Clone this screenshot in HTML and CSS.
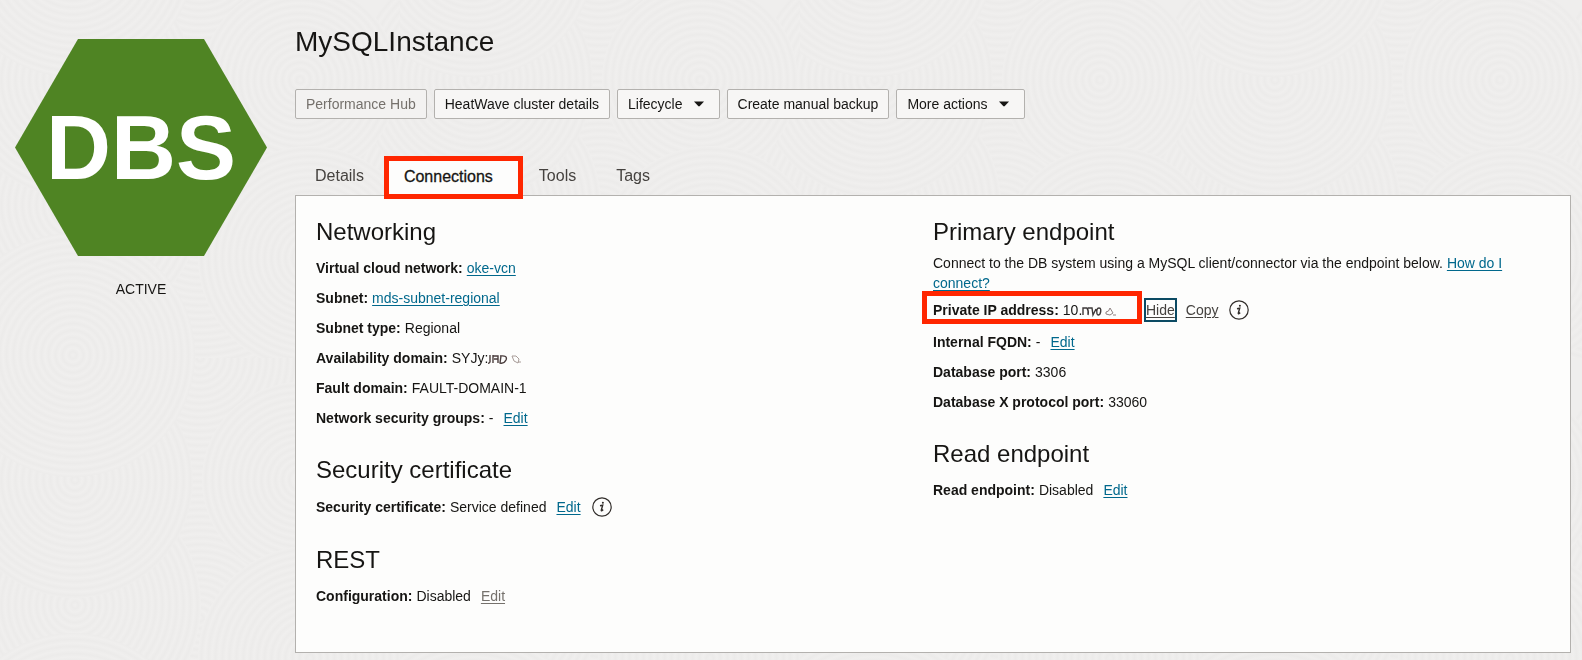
FILE: index.html
```html
<!DOCTYPE html>
<html lang="en">
<head>
<meta charset="utf-8">
<title>MySQLInstance</title>
<link rel="stylesheet" href="styles.css">
</head>
<body>
<svg class="texture" aria-hidden="true">
  <defs>
    <radialGradient id="rings" gradientUnits="userSpaceOnUse" cx="0" cy="0" r="7" spreadMethod="repeat">
      <stop offset="0" stop-color="#f0efee"/>
      <stop offset="0.5" stop-color="#ecebea"/>
      <stop offset="1" stop-color="#f0efee"/>
    </radialGradient>
    <pattern id="waves" patternUnits="userSpaceOnUse" width="400" height="400" x="0" y="-42">
      <rect width="400" height="400" fill="#efeeed"/>
      <g fill="url(#rings)">
        <circle r="160" transform="translate(200 0)"/>
        <circle r="160" transform="translate(200 400)"/>
        <circle r="150" transform="translate(200 260)"/>
        <circle r="140" transform="translate(0 320)"/>
        <circle r="140" transform="translate(400 320)"/>
        <circle r="126" transform="translate(75 247)"/>
        <circle r="126" transform="translate(475 247)"/>
        <circle r="118" transform="translate(75 122)"/>
        <circle r="118" transform="translate(475 122)"/>
        <circle r="98" transform="translate(300 122)"/>
        <circle r="112" transform="translate(310 300)"/>
        <circle r="122" transform="translate(73 -3)"/>
        <circle r="122" transform="translate(73 397)"/>
      </g>
    </pattern>
  </defs>
  <rect width="100%" height="100%" fill="url(#waves)"/>
</svg>

<div class="page">
  <aside class="resource">
    <svg class="hexagon" viewBox="0 0 252 217" role="img" aria-label="DBS">
      <polygon points="63,0 189,0 252,108.500 189,217 63,217 0,108.500" fill="#4f8423"/>
      <text class="hexagon-text" x="126" y="140" text-anchor="middle">DBS</text>
    </svg>
    <p class="state">ACTIVE</p>
  </aside>

  <main class="main">
    <h1 class="title">MySQLInstance</h1>

    <div class="actions">
      <button class="action" type="button" disabled>Performance Hub</button>
      <button class="action" type="button">HeatWave cluster details</button>
      <button class="action action-menu" type="button">Lifecycle <svg class="caret" viewBox="0 0 10 6" aria-hidden="true"><path d="M0 0.500h10L5.800 5q-.8.8-1.600 0z"/></svg></button>
      <button class="action" type="button">Create manual backup</button>
      <button class="action action-menu" type="button">More actions <svg class="caret" viewBox="0 0 10 6" aria-hidden="true"><path d="M0 0.500h10L5.800 5q-.8.8-1.600 0z"/></svg></button>
    </div>

    <nav class="tabs">
      <a class="tab" href="#details">Details</a>
      <a class="tab tab-active" href="#connections" aria-current="page">Connections</a>
      <a class="tab" href="#tools">Tools</a>
      <a class="tab" href="#tags">Tags</a>
    </nav>

    <div class="panel" id="connections">
      <div class="column">
        <section class="section">
          <h2 class="heading">Networking</h2>
          <div class="row"><span class="label">Virtual cloud network:</span><a class="link" href="#vcn">oke-vcn</a></div>
          <div class="row"><span class="label">Subnet:</span><a class="link" href="#subnet">mds-subnet-regional</a></div>
          <div class="row"><span class="label">Subnet type:</span><span class="value">Regional</span></div>
          <div class="row"><span class="label">Availability domain:</span><span class="value">SYJy:<svg class="scribble" viewBox="0 0 36 14" aria-hidden="true"><path d="M2 3v7q-1 2-3 1M5 3v8M5 4h5v3H6M10 4v7M12 4q8-1 6 4q-2 4-6 3l1-7" stroke="#4a3d3d"/><path d="M24 4l4 0 3 3-1 4-4-2-2-5M30 10h3" stroke="#a89c98" stroke-width="1"/></svg></span></div>
          <div class="row"><span class="label">Fault domain:</span><span class="value">FAULT-DOMAIN-1</span></div>
          <div class="row"><span class="label">Network security groups:</span><span class="value">-</span><a class="link edit" href="#nsg">Edit</a></div>
        </section>
        <section class="section">
          <h2 class="heading">Security certificate</h2>
          <div class="row row-info"><span class="label">Security certificate:</span><span class="value">Service defined</span><a class="link edit" href="#cert">Edit</a><button class="info" type="button" aria-label="About the security certificate"><svg viewBox="0 0 20 20" aria-hidden="true"><circle cx="10" cy="10" r="9.200"/><path class="info-stem" d="M8 8.800l2.700-.6-1.400 5q-.1.900.6.500l1.300-1.100"/><circle class="info-dot" cx="10.900" cy="5.800" r="1"/></svg></button></div>
        </section>
        <section class="section">
          <h2 class="heading">REST</h2>
          <div class="row"><span class="label">Configuration:</span><span class="value">Disabled</span><a class="link link-muted edit" href="#rest">Edit</a></div>
        </section>
      </div>

      <div class="column">
        <section class="section">
          <h2 class="heading heading-tight">Primary endpoint</h2>
          <p class="description">Connect to the DB system using a MySQL client/connector via the endpoint below. <a class="link" href="#help">How do I connect?</a></p>
          <div class="row row-ip"><span class="ip"><span class="label">Private IP address:</span><span class="value">10.<svg class="scribble" viewBox="0 0 36 14" aria-hidden="true"><path d="M1 11V4h4q2 3 1 7M6 4h4l1 7 3-6M15 10q-1-6 2-6t1 6q-2 2-3 0" stroke="#3d3838"/><path d="M24 8q3 0 4-4l3 5-3 2-4-1v-2M31 11h3" stroke="#8d8080" stroke-width="1"/></svg></span></span><a class="link link-dark hide" href="#hide">Hide</a><a class="link link-dark copy" href="#copy">Copy</a><button class="info" type="button" aria-label="About the private IP address"><svg viewBox="0 0 20 20" aria-hidden="true"><circle cx="10" cy="10" r="9.200"/><path class="info-stem" d="M8 8.800l2.700-.6-1.400 5q-.1.900.6.500l1.300-1.100"/><circle class="info-dot" cx="10.900" cy="5.800" r="1"/></svg></button></div>
          <div class="row"><span class="label">Internal FQDN:</span><span class="value">-</span><a class="link edit" href="#fqdn">Edit</a></div>
          <div class="row"><span class="label">Database port:</span><span class="value">3306</span></div>
          <div class="row"><span class="label">Database X protocol port:</span><span class="value">33060</span></div>
        </section>
        <section class="section">
          <h2 class="heading">Read endpoint</h2>
          <div class="row"><span class="label">Read endpoint:</span><span class="value">Disabled</span><a class="link edit" href="#read">Edit</a></div>
        </section>
      </div>
    </div>
  </main>
</div>
</body>
</html>
```
FILE: styles.css
```css
* {
  box-sizing: border-box;
}

body {
  margin: 0;
  background: #efeeed;
  color: #161513;
  font-family: "Liberation Sans", Arial, sans-serif;
  font-size: 14px;
  line-height: 20px;
}

.texture {
  position: fixed;
  inset: 0;
  z-index: -1;
  width: 100%;
  height: 100%;
}

.page {
  display: flex;
  gap: 28px;
  padding: 23px 11px 7px 15px;
}

.resource {
  flex: none;
  width: 252px;
  padding-top: 16px;
}

.hexagon {
  display: block;
  width: 100%;
}

.hexagon-text {
  fill: #fff;
  font-size: 90px;
  font-weight: bold;
}

.state {
  margin: 23px 0 0;
  text-align: center;
}

.main {
  flex: 1;
  min-width: 0;
}

.title {
  margin: 0;
  font-size: 28px;
  font-weight: normal;
  line-height: 38px;
}

.actions {
  display: flex;
  gap: 7px;
  margin-top: 28px;
}

.action {
  height: 30px;
  padding: 0 10px;
  border: 1px solid #b3b1ae;
  border-radius: 2px;
  background: #f7f6f5;
  color: #161513;
  font: inherit;
}

.action:disabled {
  background: #f3f2f1;
  color: #75716c;
}

.action-menu {
  display: flex;
  align-items: center;
  gap: 11px;
  padding-right: 15px;
}

.caret {
  width: 10px;
  height: 6px;
  fill: #161513;
}

.tabs {
  display: flex;
  gap: 20px;
  margin-top: 37px;
}

.tab {
  height: 39px;
  padding-left: 20px;
  color: #45423f;
  font-size: 16px;
  line-height: 39px;
  text-decoration: none;
}

.tab-active {
  position: relative;
  z-index: 1;
  height: 43px;
  margin: 0 -24px -4px 0;
  padding: 0 25px 0 15px;
  border: 5px solid #ff2600;
  background: #fdfdfc;
  color: #161513;
  line-height: 31px;
  -webkit-text-stroke: 0.3px #161513;
}

.panel {
  display: grid;
  grid-template-columns: 1fr 1fr;
  padding: 20px 20px 36px;
  border: 1px solid #b3b1ae;
  background: #fdfdfc;
}

.section + .section {
  margin-top: 26px;
}

.heading {
  margin: 0 0 10px;
  font-size: 24px;
  font-weight: normal;
  line-height: 32px;
}

.heading-tight {
  margin-bottom: 5px;
}

.row {
  display: flex;
  align-items: center;
  margin-bottom: 10px;
}

.row-info {
  height: 22px;
}

.label {
  margin-right: 4px;
  font-weight: bold;
}

.value {
  white-space: nowrap;
}

.link {
  color: #00688c;
  text-underline-offset: 2px;
}

.link-muted {
  color: #75716c;
}

.link-dark {
  color: #45423f;
}

.edit {
  margin-left: 10px;
}

.description {
  max-width: 600px;
  margin: 0;
}

.row-ip {
  height: 34px;
  margin-bottom: 5px;
}

.ip {
  position: relative;
  display: flex;
  width: 200px;
}

.ip::after {
  content: "";
  position: absolute;
  inset: -9px -9px -4px -11px;
  border: 5px solid #ff2600;
}

.hide {
  margin-left: 13px;
  outline: 2px solid #0b4a63;
}

.copy {
  margin-left: 11px;
}

.info {
  width: 20px;
  height: 20px;
  margin-left: 11px;
  padding: 0;
  border: 0;
  background: none;
}

.info svg {
  display: block;
  fill: none;
  stroke: #312d2a;
  stroke-width: 1.2;
}

.info .info-stem {
  stroke-width: 1.4;
}

.info .info-dot {
  fill: #312d2a;
  stroke: none;
}

.scribble {
  width: 36px;
  height: 14px;
  fill: none;
  stroke-width: 1.4;
  vertical-align: middle;
}
```
